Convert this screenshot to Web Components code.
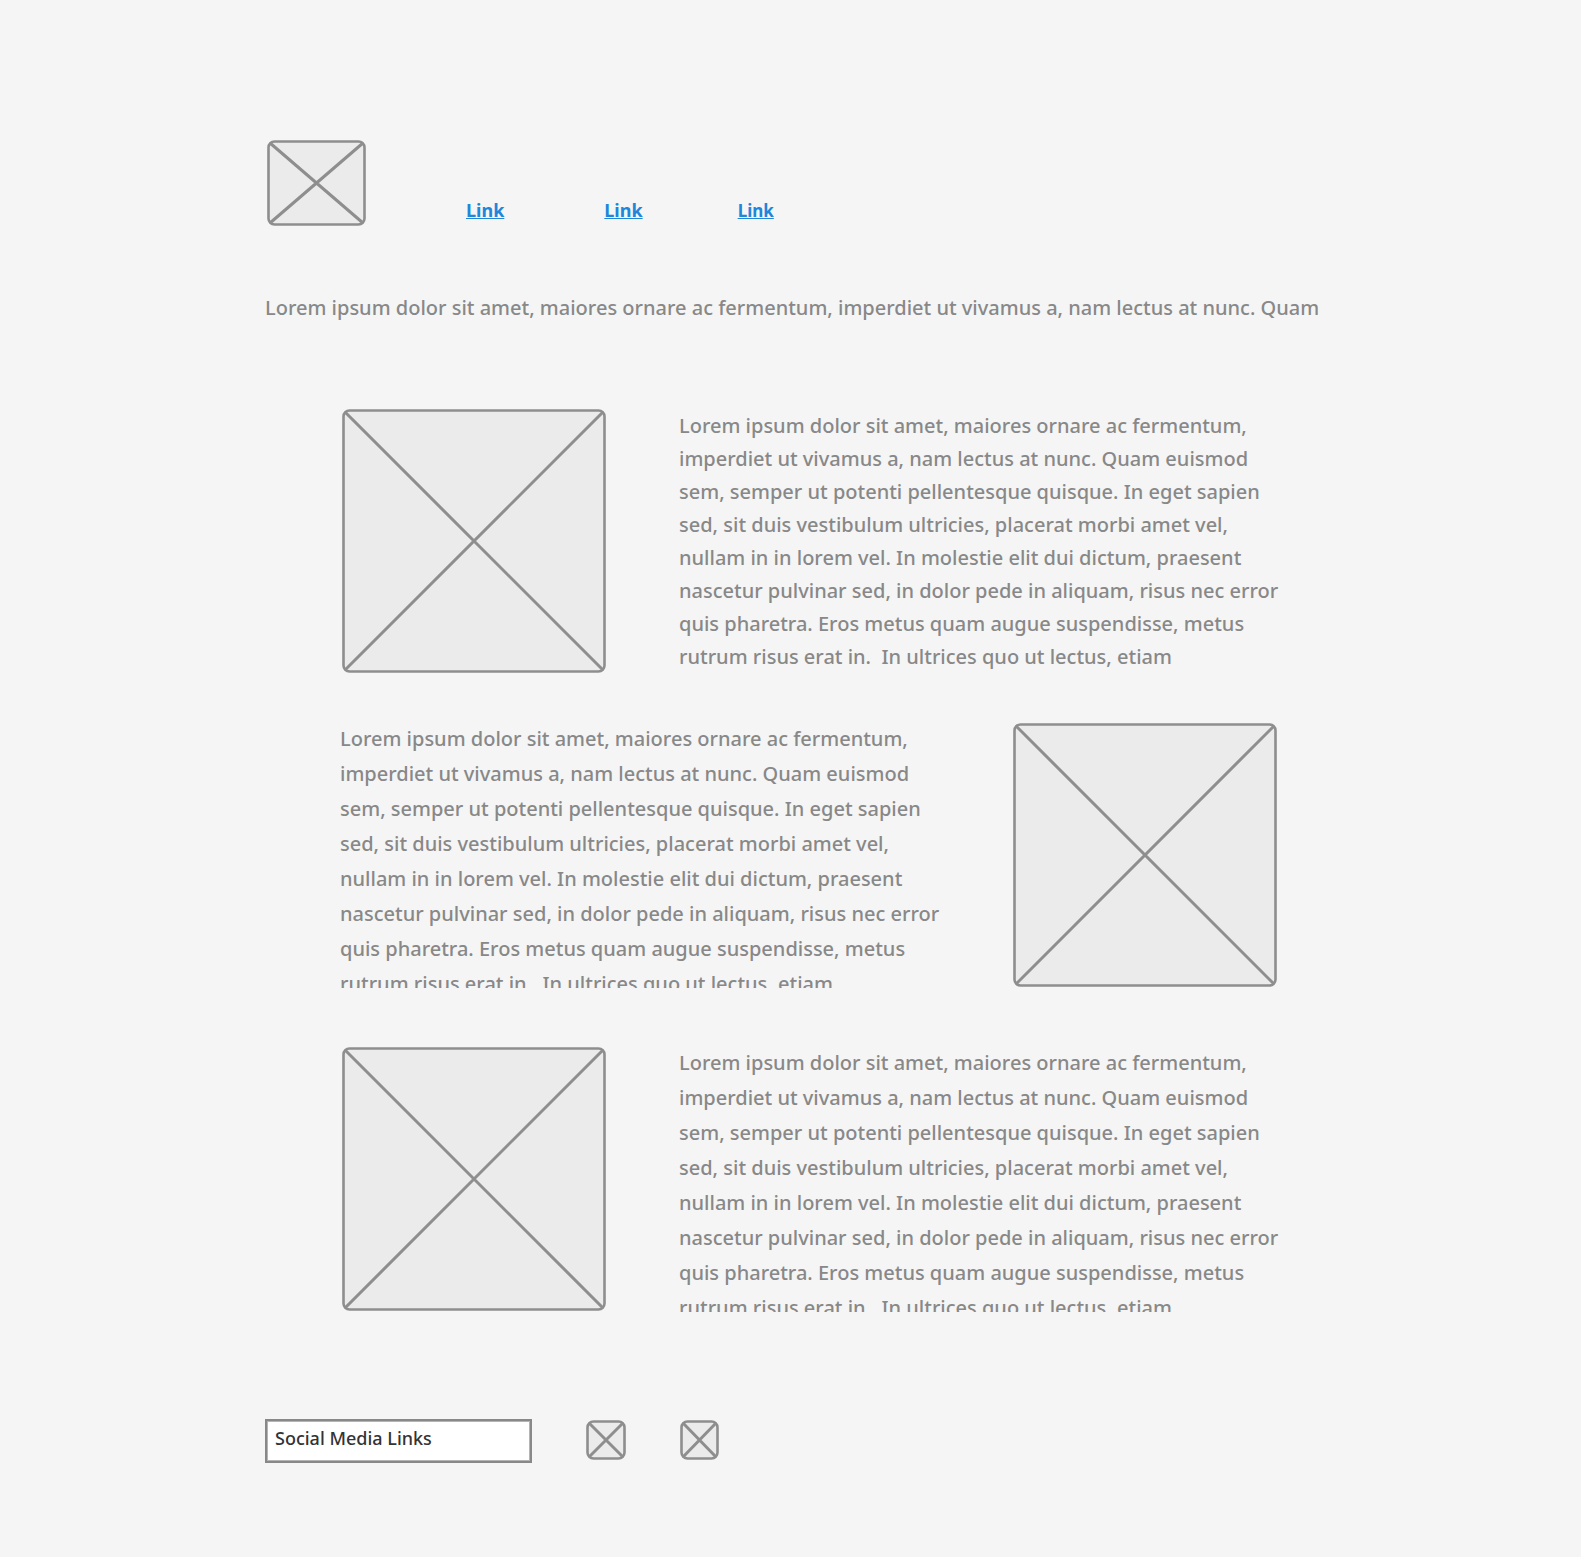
<!DOCTYPE html>
<html lang="la">
<head>
<meta charset="utf-8">
<meta name="viewport" content="width=device-width, initial-scale=1">
<title>Wireframe</title>
<style>
  body { margin: 0; background: #f5f5f5; color: #888; font: 500 20px/33px "Noto Sans", sans-serif; }
</style>
</head>
<body>
<wire-page>
  <wire-nav slot="nav"></wire-nav>
  <span slot="lead">Lorem ipsum dolor sit amet, maiores ornare ac fermentum, imperdiet ut vivamus a, nam lectus at nunc. Quam</span>
  <wire-feature></wire-feature>
  <wire-feature reverse loose></wire-feature>
  <wire-feature loose last></wire-feature>
  <wire-footer slot="footer"></wire-footer>
</wire-page>
<script>
class WireImage extends HTMLElement {
  connectedCallback() {
    const w = Number(this.getAttribute('width')), h = Number(this.getAttribute('height'));
    this.attachShadow({ mode: 'open' }).innerHTML = `
      <style>
        :host { display: block; flex: none; }
        svg { display: block; }
        rect { fill: #ebebeb; stroke: #8e8e8e; stroke-width: 2.6; }
        path { stroke: #8e8e8e; stroke-width: 3; }
      </style>
      <svg width="${w}" height="${h}" viewBox="0 0 ${w} ${h}" aria-hidden="true">
        <rect x="1.5" y="1.5" width="${w - 3}" height="${h - 3}" rx="6"/>
        <path d="M3 3L${w - 3} ${h - 3}M${w - 3} 3L3 ${h - 3}"/>
      </svg>`;
  }
}
customElements.define('wire-image', WireImage);

class WireNav extends HTMLElement {
  constructor() {
    super();
    this.attachShadow({ mode: 'open' }).innerHTML = `
      <style>
        :host { display: flex; align-items: flex-end; height: 87px; padding-left: 2px; }
        wire-image { align-self: flex-start; }
        nav { display: flex; align-items: baseline; gap: 100px; margin-left: 100px; }
        a { color: #2185d9; font-weight: 700; font-size: 18px; text-underline-offset: 1px; text-decoration-thickness: 1px; }
        a:last-child { font-size: 17px; margin-left: -5px; }
      </style>
      <wire-image width="99" height="86"></wire-image>
      <nav><a href="#">Link</a><a href="#">Link</a><a href="#">Link</a></nav>`;
  }
}
customElements.define('wire-nav', WireNav);

class WireFeature extends HTMLElement {
  constructor() {
    super();
    this.attachShadow({ mode: 'open' }).innerHTML = `
      <style>
        :host { display: flex; gap: 71px; }
        :host([reverse]) { flex-direction: row-reverse; }
        :host([last]) { margin-top: 11px; }
        wire-image { padding: 2px; }
        p { flex: 1; margin: 2px 0 0; height: 267px; overflow: hidden; white-space: pre; }
        :host([loose]) p { line-height: 35px; margin-top: 0; }
      </style>
      <wire-image width="264" height="264"></wire-image>
      <p>Lorem ipsum dolor sit amet, maiores ornare ac fermentum,
imperdiet ut vivamus a, nam lectus at nunc. Quam euismod
sem, semper ut potenti pellentesque quisque. In eget sapien
sed, sit duis vestibulum ultricies, placerat morbi amet vel,
nullam in in lorem vel. In molestie elit dui dictum, praesent
nascetur pulvinar sed, in dolor pede in aliquam, risus nec error
quis pharetra. Eros metus quam augue suspendisse, metus
rutrum risus erat in.  In ultrices quo ut lectus, etiam</p>`;
  }
}
customElements.define('wire-feature', WireFeature);

class WireFooter extends HTMLElement {
  constructor() {
    super();
    this.attachShadow({ mode: 'open' }).innerHTML = `
      <style>
        :host { display: flex; align-items: center; gap: 54px; }
        input { box-sizing: border-box; width: 267px; height: 44px; margin: 0; padding: 0 8px 6px;
          border: 2px solid #888; border-radius: 0; background: #fff; color: #333;
          box-shadow: inset 0 0 0 1px #b4b4b4; font: 500 18px "Noto Sans", sans-serif; }
        wire-image { padding-bottom: 2px; }
      </style>
      <input type="text" value="Social Media Links" aria-label="Social Media Links">
      <wire-image width="40" height="40"></wire-image>
      <wire-image width="39" height="40"></wire-image>`;
  }
}
customElements.define('wire-footer', WireFooter);

class WirePage extends HTMLElement {
  constructor() {
    super();
    this.attachShadow({ mode: 'open' }).innerHTML = `
      <style>
        :host { display: block; max-width: 1055px; margin: 0 auto; padding: 140px 18px 94px 22px; }
        h1 { font: inherit; margin: 64px 0 83px; }
        main { display: flex; flex-direction: column; gap: 45px; padding: 0 41px 0 75px; }
        footer { margin-top: 106px; }
      </style>
      <header><slot name="nav"></slot></header>
      <h1><slot name="lead"></slot></h1>
      <main><slot></slot></main>
      <footer><slot name="footer"></slot></footer>`;
  }
}
customElements.define('wire-page', WirePage);
</script>
</body>
</html>
